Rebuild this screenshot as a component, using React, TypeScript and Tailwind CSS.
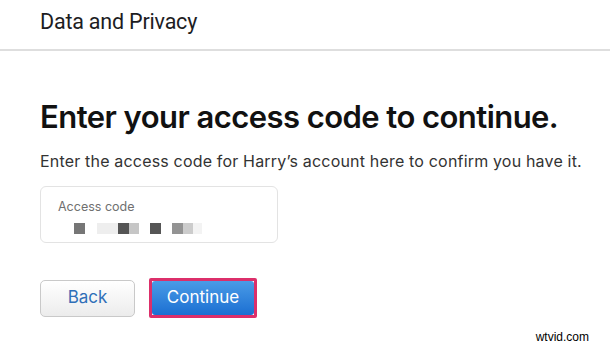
import React from "react";

const codeCells: { w: number; color: string }[] = [
  { w: 16, color: "#ffffff" },
  { w: 11, color: "#767676" },
  { w: 12, color: "#ffffff" },
  { w: 21, color: "#eeeeee" },
  { w: 11, color: "#555555" },
  { w: 10, color: "#c6c6c6" },
  { w: 11, color: "#ffffff" },
  { w: 11, color: "#555555" },
  { w: 11, color: "#ffffff" },
  { w: 11, color: "#939393" },
  { w: 10, color: "#cccccc" },
  { w: 9, color: "#f3f3f3" },
];

const App: React.FC = () => {
  return (
    <div className="relative w-full h-[349px] bg-white overflow-hidden font-['Inter','Liberation_Sans',sans-serif] text-[#1d1d1f]">
      {/* header */}
      <div className="h-[51px] border-b-2 border-[#dedede] px-[40px] flex items-center">
        <h1 className="text-[21.5px] leading-none pb-[6px] font-['Roboto','Liberation_Sans',sans-serif] text-[#1d1d1f] tracking-[-0.2px]">
          Data and Privacy
        </h1>
      </div>

      <div className="px-[40px] pt-[46px]">
        <h2 className="whitespace-nowrap text-[31px] leading-[40px] font-semibold tracking-[-0.55px] text-[#111]">
          Enter your access code to continue.
        </h2>
        <p className="mt-[14px] whitespace-nowrap text-[16px] leading-[20px] tracking-[0.18px] text-[#333]">
          Enter the access code for Harry’s account here to confirm you have it.
        </p>

        <div className="mt-[15px] w-[238px] h-[57px] border border-[#e3e3e3] rounded-[6px] px-[17px] pt-[12px]">
          <div className="text-[12.5px] leading-[16px] text-[#707070]">Access code</div>
          <div className="mt-[8px] flex h-[11px]">
            {codeCells.map((c, i) => (
              <div key={i} className="h-full" style={{ width: c.w, backgroundColor: c.color }} />
            ))}
          </div>
        </div>

        <div className="mt-[35px] flex items-center gap-[14px]">
          <button className="w-[95px] h-[37px] rounded-[5px] border border-[#c9c9c9] bg-gradient-to-b from-[#ffffff] to-[#ececec] text-[17px] text-[#2f6fb8]">
            Back
          </button>
          <div className="border-[3px] border-[#dc2f6a] rounded-[2px]">
            <button className="w-[102px] h-[34px] rounded-[3px] bg-gradient-to-b from-[#4a9be6] to-[#1a6fd2] text-[17px] text-white">
              Continue
            </button>
          </div>
        </div>
      </div>

      <div className="absolute right-[21px] bottom-[3px] text-[12px] text-black font-['Liberation_Sans',sans-serif]">
        wtvid.com
      </div>
    </div>
  );
};

export default App;
